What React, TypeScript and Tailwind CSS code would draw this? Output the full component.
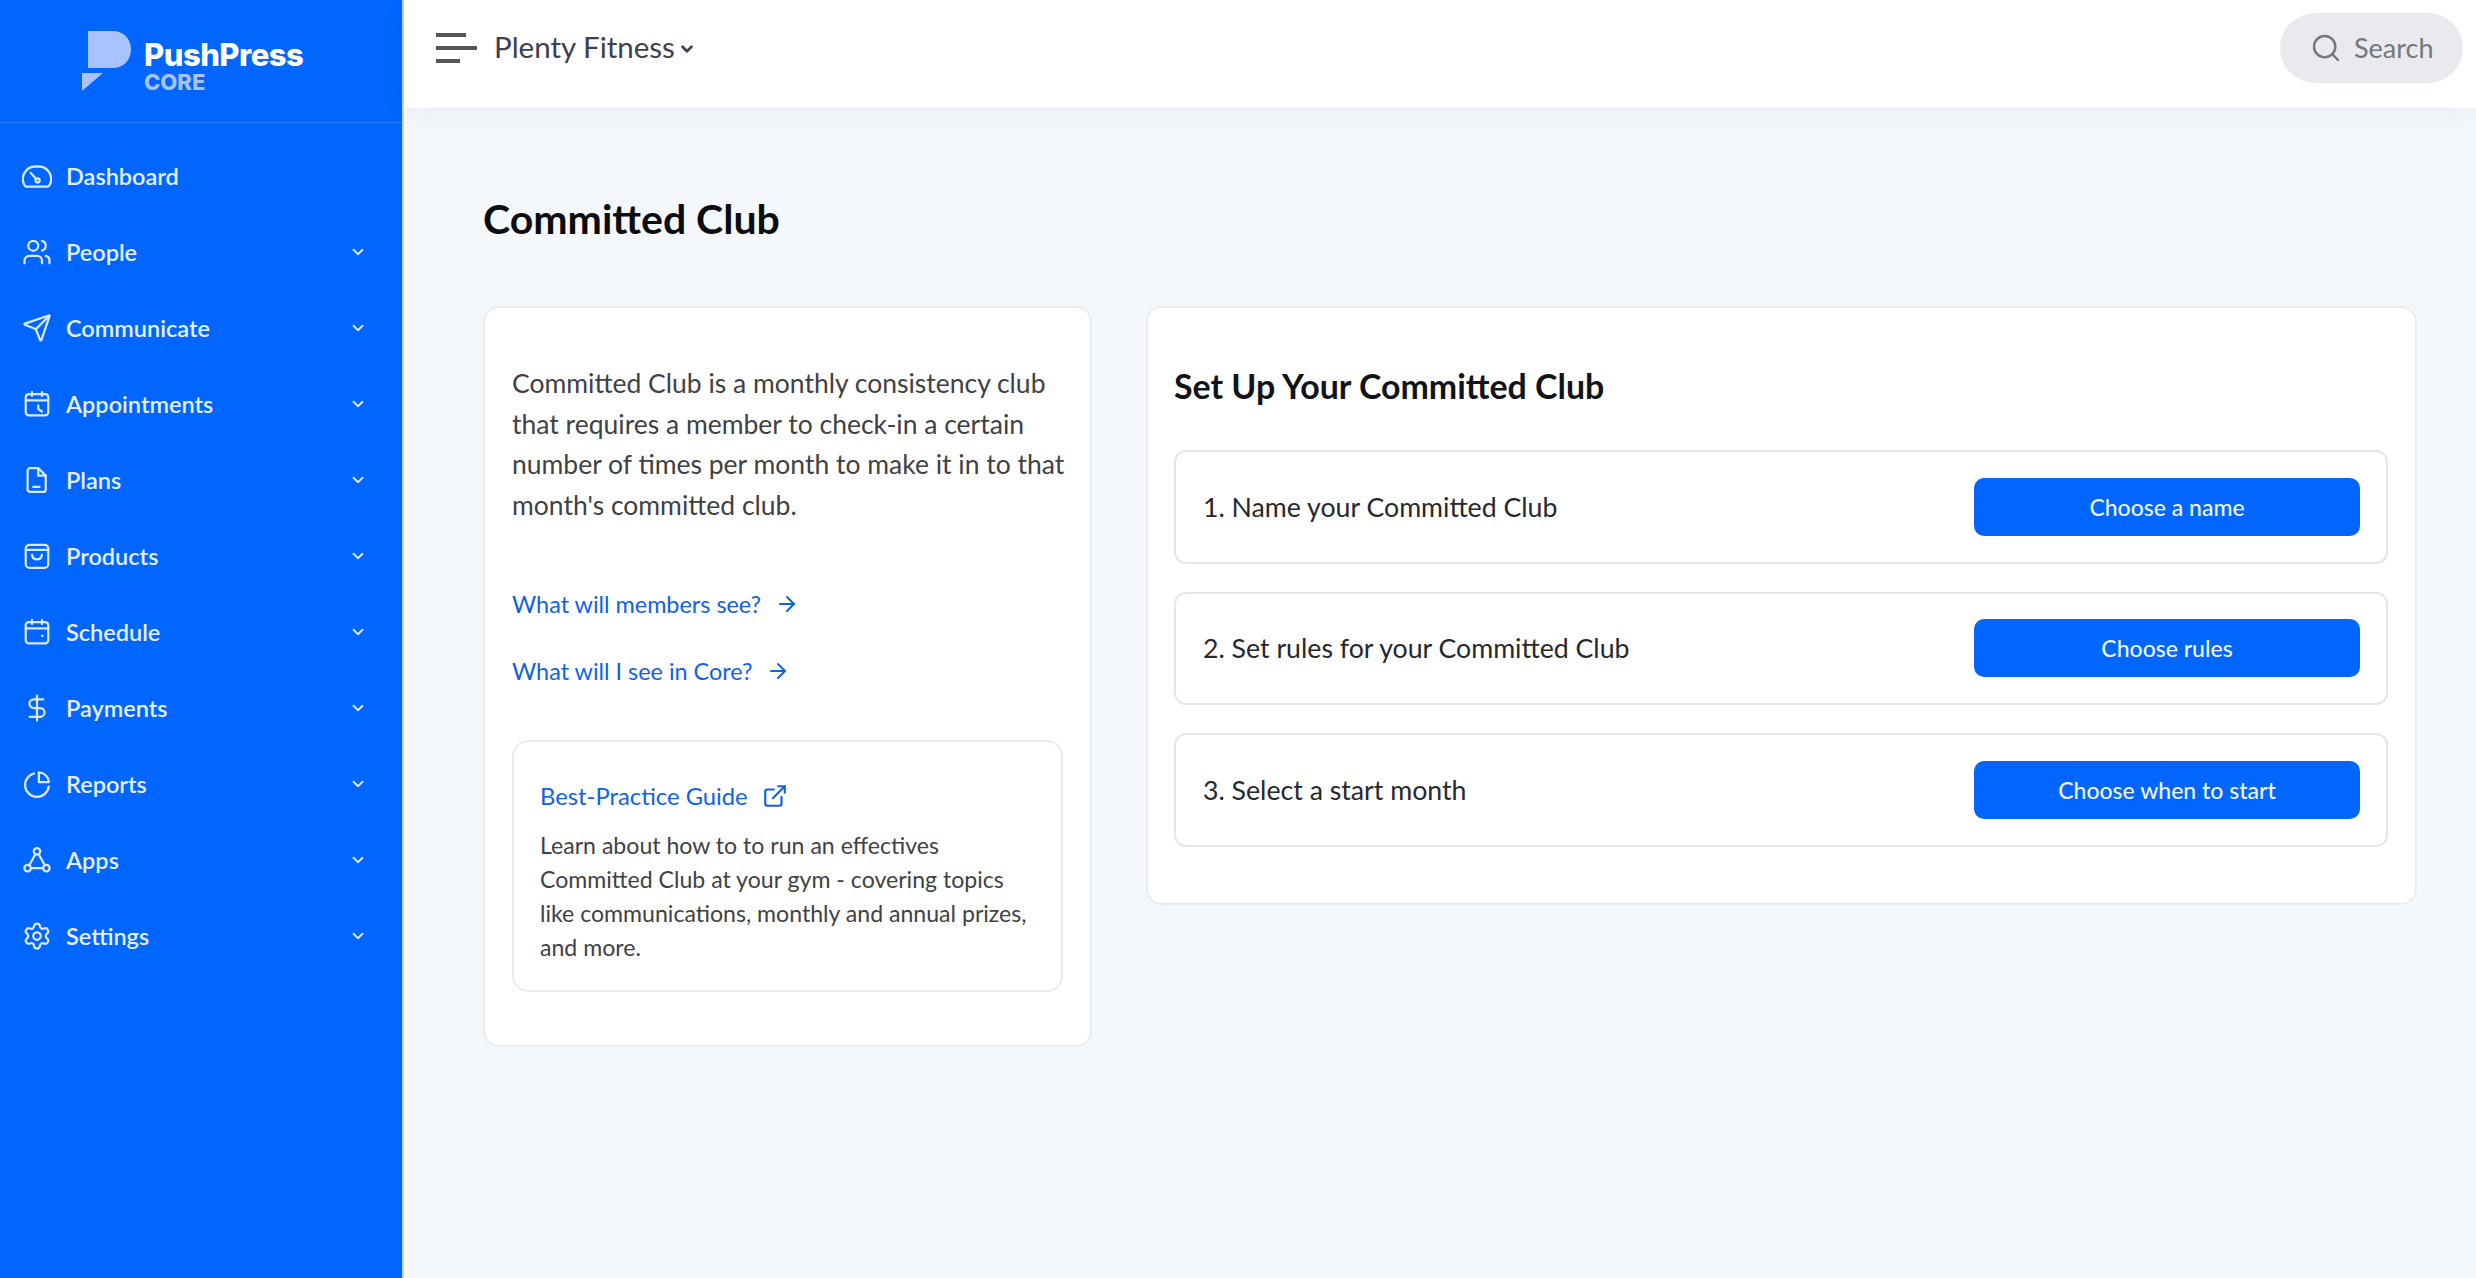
import type { ReactNode } from 'react';
import { ArrowRight, ChevronDown, DollarSign, ExternalLink, Search, Send, Settings, Users } from 'lucide-react';

const lato = "font-['Lato','Noto_Sans',sans-serif]";

function NavIcon({ children }: { children: ReactNode }) {
  return (
    <svg
      viewBox="0 0 24 24"
      fill="none"
      stroke="currentColor"
      strokeWidth={1.8}
      strokeLinecap="round"
      strokeLinejoin="round"
      className="h-[30px] w-[30px] shrink-0"
    >
      {children}
    </svg>
  );
}

const navItems: { label: string; icon: ReactNode; chevron?: boolean }[] = [
  {
    label: 'Dashboard',
    icon: (
      <NavIcon>
        <path d="M3.4 20.5h17.2c.6 0 1-.3 1.2-.9A10 10 0 0 0 12 4.500a10 10 0 0 0-9.800 15.100c.2.6.6.9 1.200.9z" />
        <path d="M7 9.500l4.200 4.700" />
        <circle cx="12.500" cy="15.500" r="1.600" />
      </NavIcon>
    ),
  },
  { label: 'People', chevron: true, icon: <Users className="h-[30px] w-[30px] shrink-0" strokeWidth={1.8} /> },
  { label: 'Communicate', chevron: true, icon: <Send className="h-[30px] w-[30px] shrink-0" strokeWidth={1.8} /> },
  {
    label: 'Appointments',
    chevron: true,
    icon: (
      <NavIcon>
        <rect x="3" y="4" width="18" height="17" rx="2.500" />
        <path d="M3 9h18M8 2.500v3M16 2.500v3M13 13v3l3 2" />
      </NavIcon>
    ),
  },
  {
    label: 'Plans',
    chevron: true,
    icon: (
      <NavIcon>
        <path d="M6.500 2.500H13l6 6v11a2 2 0 0 1-2 2H6.500a2 2 0 0 1-2-2v-15a2 2 0 0 1 2-2z" />
        <path d="M13 2.500v6h6M9 17.500h5" />
      </NavIcon>
    ),
  },
  {
    label: 'Products',
    chevron: true,
    icon: (
      <NavIcon>
        <rect x="3" y="3" width="18" height="18.500" rx="3" />
        <path d="M3 7h18M8 11c.6 5 7.400 5 8 0" />
      </NavIcon>
    ),
  },
  {
    label: 'Schedule',
    chevron: true,
    icon: (
      <NavIcon>
        <rect x="3" y="4" width="18" height="17" rx="2.500" />
        <path d="M3 9h18M8 2.500v3M16 2.500v3M16 15h.5" />
      </NavIcon>
    ),
  },
  { label: 'Payments', chevron: true, icon: <DollarSign className="h-[30px] w-[30px] shrink-0" strokeWidth={1.8} /> },
  {
    label: 'Reports',
    chevron: true,
    icon: (
      <NavIcon>
        <path d="M9.500 3.600A9.500 9.500 0 1 0 21.400 14" />
        <path d="M13.500 2.600A8.500 8.500 0 0 1 21.500 10.500h-8z" />
      </NavIcon>
    ),
  },
  {
    label: 'Apps',
    chevron: true,
    icon: (
      <NavIcon>
        <circle cx="12" cy="5" r="2.600" />
        <circle cx="4.500" cy="18.500" r="2.600" />
        <circle cx="19.500" cy="18.500" r="2.600" />
        <path d="M10.700 7.300l-4.900 8.900M13.300 7.300l4.900 8.900M7.100 18.500h9.800" />
      </NavIcon>
    ),
  },
  { label: 'Settings', chevron: true, icon: <Settings className="h-[30px] w-[30px] shrink-0" strokeWidth={1.8} /> },
];

const steps = [
  { label: '1. Name your Committed Club', action: 'Choose a name' },
  { label: '2. Set rules for your Committed Club', action: 'Choose rules' },
  { label: '3. Select a start month', action: 'Choose when to start' },
];

function Sidebar() {
  return (
    <aside className="flex h-full w-[404px] shrink-0 flex-col border-r-2 border-[#b9d3fb] bg-[#0066ff]">
      {/* Logo */}
      <div className="flex h-[123px] shrink-0 items-start gap-[12px] border-b border-[#2a7dff] pl-[82px] pt-[31px]">
        <svg viewBox="0 0 50 60" className="h-[60px] w-[50px] shrink-0">
          <path d="M6 0h25c10.500 0 18 8 18 18.500S41.500 37 31 37H6z" fill="#a8c3ff" />
          <path d="M0 42h21L0 60z" fill="#a8c3ff" />
        </svg>
        <div className="pt-[9px] font-['Inter',sans-serif] font-extrabold">
          <div className="text-[31px] leading-[30px] tracking-[-0.5px] text-white">PushPress</div>
          <div className="text-[22px] leading-[24px] text-[#a8c3ff]">CORE</div>
        </div>
      </div>

      <nav className={`flex flex-col pt-[15px] ${lato}`}>
        {navItems.map((item) => (
          <div key={item.label} className="flex h-[76px] items-center pl-[22px] pr-[35px] text-[#dbe8ff]">
            {item.icon}
            <span className="ml-[14px] pt-[1px] text-[23.500px] font-semibold text-[#e6efff]">{item.label}</span>
            {item.chevron && <ChevronDown className="ml-auto h-[18px] w-[18px]" strokeWidth={2.500} />}
          </div>
        ))}
      </nav>
    </aside>
  );
}

function Topbar() {
  return (
    <header className="flex h-[108px] shrink-0 items-center bg-white pb-[13px] pl-[32px] pr-[13px] shadow-[0_6px_24px_rgba(30,50,80,0.06)]">
      <div className="flex flex-col gap-[9px]">
        <span className="h-[4px] w-[30px] bg-[#55565a]" />
        <span className="h-[4px] w-[41px] bg-[#55565a]" />
        <span className="h-[4px] w-[24px] bg-[#55565a]" />
      </div>
      <span className="ml-[17px] text-[29.500px] text-[#3c4052]">Plenty Fitness</span>
      <ChevronDown className="ml-[3px] mt-[3px] h-[18px] w-[18px] text-[#3c4052]" strokeWidth={3.500} />
      <div className="ml-auto flex h-[70px] w-[183px] items-center gap-[12px] rounded-full bg-[#e8eaed] pl-[30px] text-[#747780]">
        <Search className="h-[32px] w-[32px]" strokeWidth={1.8} />
        <span className="pt-[2px] text-[27px]">Search</span>
      </div>
    </header>
  );
}

function InfoCard() {
  return (
    <section className="w-[609px] shrink-0 rounded-[16px] border-2 border-[#e9ecef] bg-white px-[27px] pb-[53px] pt-[55px]">
      <p className="-mr-[8px] text-[26.500px] leading-[40.600px] text-[#3f4144]">
        Committed Club is a monthly consistency club that requires a member to check-in a certain number of times per
        month to make it in to that month's committed club.
      </p>
      <div className="mt-[63px] flex items-center gap-[14px] text-[23.400px] leading-[32px] text-[#0f62e6]">
        What will members see? <ArrowRight className="h-[24px] w-[24px]" strokeWidth={2} />
      </div>
      <div className="mt-[35px] flex items-center gap-[14px] text-[23.400px] leading-[32px] text-[#0f62e6]">
        What will I see in Core? <ArrowRight className="h-[24px] w-[24px]" strokeWidth={2} />
      </div>
      <div className="mt-[53px] rounded-[16px] border-2 border-[#e9ecef] pb-[26px] pl-[26px] pr-[24px] pt-[38px]">
        <div className="flex items-center gap-[14px] text-[23.800px] leading-[32px] text-[#0f62e6]">
          Best-Practice Guide <ExternalLink className="h-[26px] w-[26px]" strokeWidth={2} />
        </div>
        <p className="mt-[16px] text-[23.100px] leading-[34px] text-[#3f4144]">
          Learn about how to to run an effectives Committed Club at your gym - covering topics like communications,
          monthly and annual prizes, and more.
        </p>
      </div>
    </section>
  );
}

function SetupCard() {
  return (
    <section className="flex-1 rounded-[16px] border-2 border-[#e9ecef] bg-white pb-[56px] pl-[26px] pr-[27px] pt-[55px]">
      <h2 className="text-[33.900px] font-bold leading-[46px] text-[#111318]">Set Up Your Committed Club</h2>
      <div className="mt-[41px] flex flex-col gap-[28px]">
        {steps.map((step) => (
          <div
            key={step.label}
            className="flex h-[113.500px] items-center justify-between rounded-[12px] border-2 border-[#e4e6e9] pl-[27px] pr-[26px]"
          >
            <span className="text-[26.700px] text-[#26282c]">{step.label}</span>
            <button className="h-[58px] w-[386px] rounded-[10px] bg-[#0066ff] text-[23px] font-medium text-[#f0f5ff]">
              {step.action}
            </button>
          </div>
        ))}
      </div>
    </section>
  );
}

export default function App() {
  return (
    <div className={`flex h-screen w-full overflow-hidden bg-[#f5f8fb] ${lato}`}>
      <Sidebar />
      <div className="flex min-w-0 flex-1 flex-col">
        <Topbar />
        <main className="flex-1 pl-[79px] pr-[59px]">
          <h1 className="pt-[85px] text-[41px] font-bold leading-[52px] text-[#0b0c0f]">Committed Club</h1>
          <div className="mt-[61px] flex items-start gap-[54px]">
            <InfoCard />
            <SetupCard />
          </div>
        </main>
      </div>
    </div>
  );
}
